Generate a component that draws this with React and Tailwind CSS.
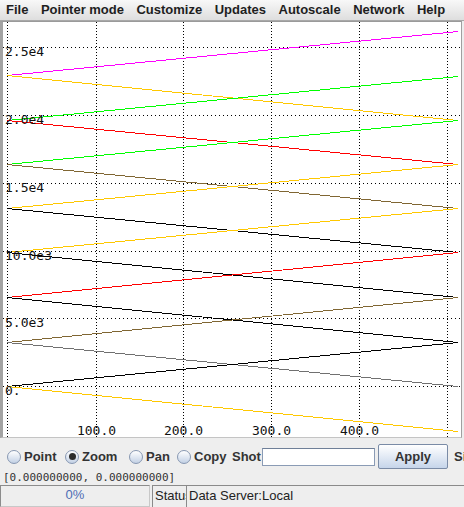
import React from "react";

const LINES = [
  ["#ff00ff", 75, 31],
  ["#ffc800", 75, 120],
  ["#00ff00", 120, 76],
  ["#ff0000", 120, 164],
  ["#00ff00", 164, 120],
  ["#806633", 164, 208],
  ["#ffc800", 208, 164],
  ["#000000", 208, 252],
  ["#ffc800", 252, 208],
  ["#000000", 252, 297],
  ["#ff0000", 297, 252],
  ["#000000", 297, 342],
  ["#806633", 342, 297],
  ["#707070", 342, 386],
  ["#000000", 386, 342],
  ["#ffc800", 386, 431],
];

const VX = [7, 96, 183, 271, 359, 447];
const HY = [47, 115, 183, 251, 318, 386];
const YL = ["2.5e4", "2.0e4", "1.5e4", "10.0e3", "5.0e3", "0."];
const XL = [
  ["100.0", 96],
  ["200.0", 183],
  ["300.0", 271],
  ["400.0", 359],
];

function Plot() {
  return (
    <svg width="458" height="415" className="block" shapeRendering="crispEdges">
      <g transform="translate(-3,-22)">
        {VX.map((x) => (
          <line key={"v" + x} x1={x + 0.5} x2={x + 0.5} y1={22} y2={437} stroke="#000" strokeWidth="1" strokeDasharray="1 2" />
        ))}
        {HY.map((y) => (
          <line key={"h" + y} x1={3} x2={461} y1={y + 0.5} y2={y + 0.5} stroke="#000" strokeWidth="1" strokeDasharray="1 3" />
        ))}
        {LINES.map(([c, a, b], i) => (
          <line key={i} x1={7} y1={a + 0.5} x2={458} y2={b + 0.5} stroke={c} strokeWidth="1" />
        ))}
        <g fontFamily="'DejaVu Sans Mono', monospace" fontSize="13" fill="#111" shapeRendering="auto">
          {HY.map((y, i) => (
            <text key={"yl" + i} x={5} y={y + 9}>{YL[i]}</text>
          ))}
          {XL.map(([t, x]) => (
            <text key={t} x={x + 0.5} y={434.5} textAnchor="middle">{t}</text>
          ))}
        </g>
      </g>
    </svg>
  );
}

function Radio({ checked }) {
  return (
    <span className="w-[14px] h-[14px] shrink-0 rounded-full border border-[#8797b2] bg-linear-to-b from-white to-[#c3d1e5] flex items-center justify-center">
      {checked && <span className="w-[7px] h-[7px] rounded-full bg-[#2b2b2b]" />}
    </span>
  );
}

function RadioItem({ label, checked, w }) {
  return (
    <div className={`flex items-center gap-[3px] shrink-0 ${w}`}>
      <Radio checked={checked} />
      <span>{label}</span>
    </div>
  );
}

export default function App() {
  return (
    <div className="w-[464px] h-[507px] overflow-hidden bg-[#eeeeee] flex flex-col text-black font-['Liberation_Sans',Arial,sans-serif]">
      <div className="h-[21px] shrink-0 flex items-center whitespace-nowrap bg-linear-to-b from-[#f8f8f8] to-[#dedede] border-b border-[#a8a8a8] pl-[6px] gap-[12.5px] text-[13px] font-bold text-[#1e1e1e]">
        <span>File</span>
        <span>Pointer mode</span>
        <span>Customize</span>
        <span>Updates</span>
        <span>Autoscale</span>
        <span>Network</span>
        <span>Help</span>
      </div>

      <div className="h-[417px] shrink-0 mr-[2px] border-l-[3px] border-l-[#a3a3a3] border-t border-r border-b border-t-[#9a9a9a] border-r-[#a0a0a0] border-b-[#c4c4c4] bg-white overflow-hidden">
        <Plot />
      </div>

      <div className="h-[34px] shrink-0 flex items-center whitespace-nowrap pl-[7px] pt-[3px] text-[13px] font-bold text-[#333]">
        <RadioItem label="Point" w="w-[58px]" />
        <RadioItem label="Zoom" checked w="w-[64px]" />
        <RadioItem label="Pan" w="w-[48px]" />
        <RadioItem label="Copy" w="w-[55px]" />
        <span className="w-[30px] shrink-0">Shot</span>
        <div className="w-[113px] h-[18px] shrink-0 bg-white border border-[#8a9bb5] border-t-[#6f7f98]" />
        <button className="ml-[3px] w-[70px] h-[25px] shrink-0 rounded-[2px] border border-[#7a8ba6] bg-linear-to-b from-white to-[#c6d5ea] text-[13px] font-bold text-[#333]">
          Apply
        </button>
        <span className="ml-[6px] shrink-0">Signal</span>
      </div>

      <div className="h-[13px] shrink-0 pl-[3px] text-[11px] leading-[11px] text-[#333] whitespace-nowrap font-['DejaVu_Sans_Mono',monospace]">
        [0.000000000, 0.000000000]
      </div>

      <div className="h-[22px] shrink-0 flex text-[13px] leading-[18px] whitespace-nowrap">
        <div className="w-[150px] shrink-0 border border-[#8c8c8c] border-r-[#c8c8c8] border-b-[#c8c8c8] bg-[#eeeeee] flex justify-center text-[#4d6db5]">
          0%
        </div>
        <div className="w-[34px] ml-[2px] shrink-0 overflow-hidden border-t border-l border-[#8a8a8a] pl-[2px] pt-[1px] text-[#222]">
          Status
        </div>
        <div className="flex-1 overflow-hidden border-t border-l border-[#8a8a8a] pl-[2px] pt-[1px] text-[#222]">
          Data Server:Local
        </div>
      </div>
    </div>
  );
}
